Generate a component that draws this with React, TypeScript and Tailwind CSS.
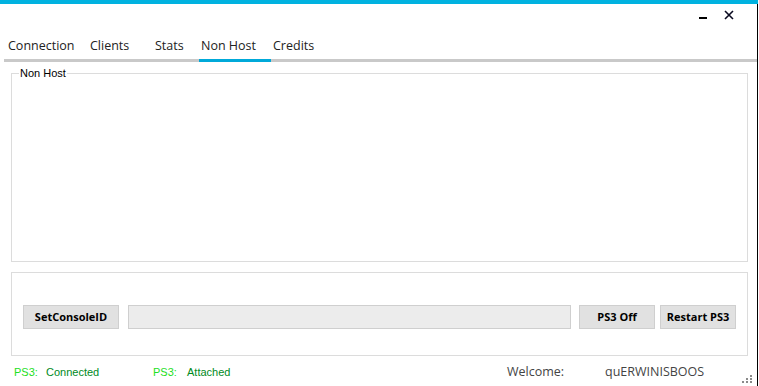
import React from "react";

// Tab strip entries with their measured widths.
const TABS: { label: string; width: string; active?: boolean }[] = [
  { label: "Connection", width: "w-[82px]" },
  { label: "Clients", width: "w-[65px]" },
  { label: "Stats", width: "w-[46px]" },
  { label: "Non Host", width: "w-[72px]", active: true },
  { label: "Credits", width: "w-[70px]" },
];

const ui = { fontFamily: '"Open Sans", "Noto Sans", sans-serif' };
const win = { fontFamily: '"Liberation Sans", Arial, sans-serif' };

const FlatButton: React.FC<{ label: string; className: string }> = ({ label, className }) => (
  <button
    className={`h-[24px] shrink-0 bg-[#e1e1e1] border border-[#cfcfcf] text-[11px] font-bold text-black ${className}`}
    style={ui}
  >
    {label}
  </button>
);

export default function App() {
  return (
    <div className="w-[759px] h-[386px] bg-white overflow-hidden flex flex-col">
      {/* accent strip */}
      <div className="h-[4px] w-[758px] bg-[#00b2e0] shrink-0" />

      <div className="w-[758px] flex-1 border-r border-black flex flex-col">
        {/* ── Window controls ─────────────────────────────── */}
        <div className="h-[30px] flex items-start justify-end pr-[23px] gap-[17px]">
          <span className="mt-[13px] w-[8px] h-[2px] bg-black" />
          <svg width="10" height="10" viewBox="0 0 10 10" className="mt-[6px]">
            <path d="M1 1 L9 9 M9 1 L1 9" stroke="#0a0a20" strokeWidth="1.6" />
          </svg>
        </div>

        {/* ── Tab strip ───────────────────────────────────── */}
        <div className="ml-[4px] w-[753px] h-[28px] border-b-[3px] border-[#c9c9c9] flex items-stretch pl-[2px]">
          {TABS.map((t) => (
            <div
              key={t.label}
              className={`${t.width} -mb-[3px] pl-[2px] pt-[3px] text-[12.5px] text-[#222] border-b-[3px] ${
                t.active ? "border-[#00a9d9]" : "border-transparent"
              }`}
              style={ui}
            >
              {t.label}
            </div>
          ))}
        </div>

        {/* ── Non Host group ──────────────────────────────── */}
        <div className="relative ml-[11px] mt-[11px] w-[737px] h-[189px] border border-[#dcdcdc] shrink-0">
          <span className="absolute -top-[7px] left-[7px] bg-white px-[1px] text-[11px] leading-[13px] text-black" style={win}>
            Non Host
          </span>
        </div>

        {/* ── Console actions ─────────────────────────────── */}
        <div className="ml-[11px] mt-[10px] w-[737px] h-[84px] border border-[#dcdcdc] shrink-0 flex items-start pt-[32px] pl-[11px]">
          <FlatButton label="SetConsoleID" className="w-[96px]" />
          <div className="ml-[9px] w-[443px] h-[24px] bg-[#ececec] border border-[#cfcfcf]" />
          <FlatButton label="PS3 Off" className="ml-[8px] w-[76px]" />
          <FlatButton label="Restart PS3" className="ml-[5px] w-[76px]" />
        </div>

        {/* ── Status bar ──────────────────────────────────── */}
        <div className="flex-1 flex items-center pl-[14px] pt-[2px] text-[11px]" style={win}>
          <span className="w-[32px] text-[#22e022]">PS3:</span>
          <span className="w-[107px] text-[#008a1c]">Connected</span>
          <span className="w-[34px] text-[#22e022]">PS3:</span>
          <span className="w-[320px] text-[#008a1c]">Attached</span>
          <span className="w-[98px] text-[12.5px] text-[#444]" style={ui}>Welcome:</span>
          <span className="text-[12.5px] text-[#444]" style={ui}>quERWINISBOOS</span>
          <svg width="11" height="9" viewBox="0 0 11 9" className="ml-auto mr-[4px] self-end mb-[2px]">
            <rect x="8" y="0" width="2" height="2" fill="#8a8a8a" />
            <rect x="4" y="3" width="2" height="2" fill="#8a8a8a" />
            <rect x="8" y="3" width="2" height="2" fill="#8a8a8a" />
            <rect x="0" y="6" width="2" height="2" fill="#8a8a8a" />
            <rect x="4" y="6" width="2" height="2" fill="#8a8a8a" />
            <rect x="8" y="6" width="2" height="2" fill="#8a8a8a" />
          </svg>
        </div>
      </div>
    </div>
  );
}
